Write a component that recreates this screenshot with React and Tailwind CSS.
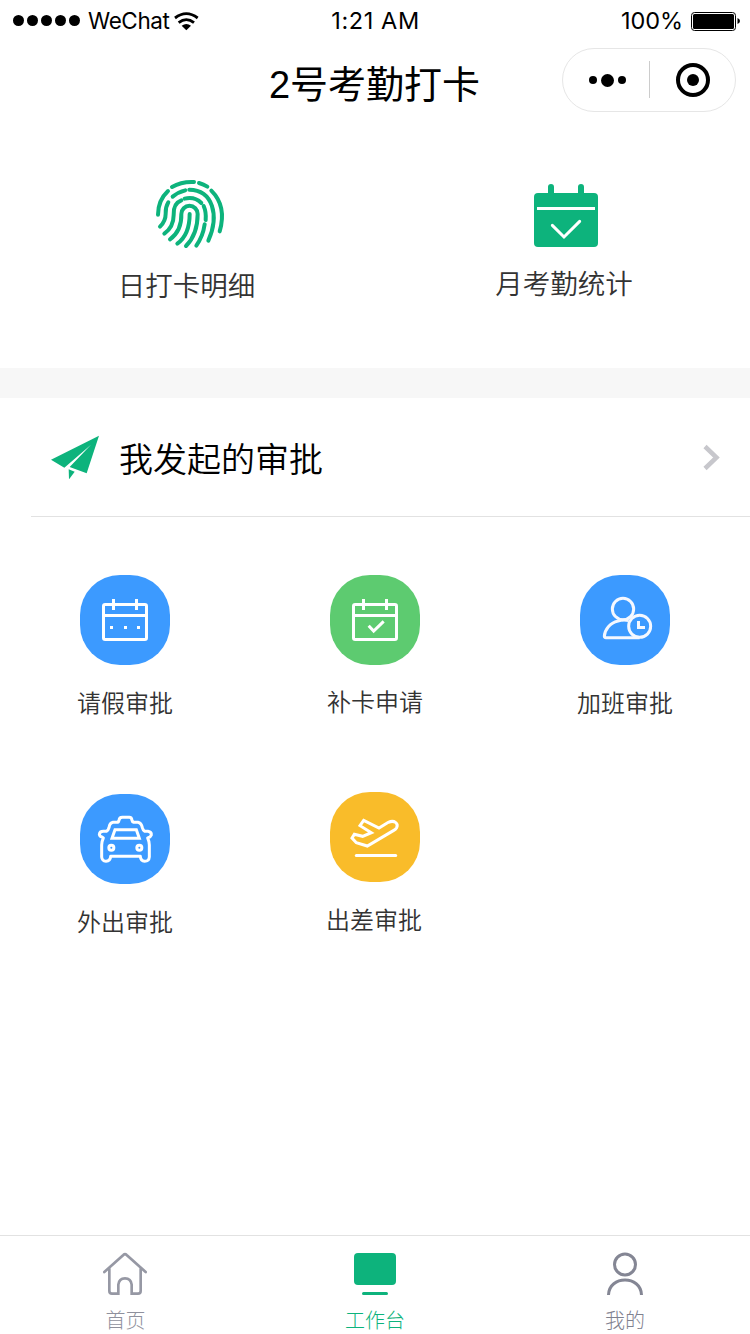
const green = "#0db37c";

function StatusBar() {
  return (
    <div className="grid h-10 grid-cols-3 items-center pl-[13px] pr-[9px] font-['Inter',sans-serif] text-[23.5px] leading-[40px] text-black">
      <div className="flex items-center">
        <div className="flex gap-[3px]">
          {[0, 1, 2, 3, 4].map((i) => (
            <span key={i} className="size-[11px] rounded-full bg-black" />
          ))}
        </div>
        <span className="ml-[8px] w-[86px] pt-px text-[22.500px] tracking-[-0.4px]">WeChat</span>
        <svg className="h-[20px] w-[26px]" viewBox="522 33 78 60" fill="none" stroke="#000" strokeWidth="8.500">
          <path d="M525 54 Q559 28 593 54" />
          <path d="M536 68 Q559 50 582 68" />
          <path d="M545 77 Q559 67 573 77 L559 91Z" fill="#000" stroke="none" />
        </svg>
      </div>
      <div className="pr-[3px] text-center tracking-[0.6px]">1:21 AM</div>
      <div className="flex items-center justify-end">
        <span className="mr-[8px] tracking-[-0.1px]">100%</span>
        <svg className="h-[20px] w-[50px]" viewBox="0 0 50 20">
          <rect x=".5" y="1.5" width="44" height="18" rx="3" fill="#fff" stroke="#000" />
          <rect x="2" y="3" width="41" height="15" rx="1.5" />
          <path d="M46.5 7 Q49 8 49 10 Q49 12 46.5 13Z" />
        </svg>
      </div>
    </div>
  );
}

function NavBar() {
  return (
    <header className="grid h-[88px] grid-cols-[1fr_auto_1fr] items-start pr-[1px] pt-2">
      <div />
      <h1 className="pt-[10px] font-['Liberation_Sans','Noto_Sans_CJK_SC',sans-serif] text-[38px] font-normal leading-[54px] text-black">2号考勤打卡</h1>
      <div className="mr-[13px] flex h-16 w-[174px] items-center justify-self-end rounded-full border border-[#e6e6e6]">
        <div className="flex w-[86px] items-center justify-center gap-1 pl-[2px]">
          <span className="size-2 rounded-full bg-black" />
          <span className="size-[13px] rounded-full bg-black" />
          <span className="size-2 rounded-full bg-black" />
        </div>
        <span className="mb-[2px] h-[37px] w-px bg-[#cccccc]" />
        <div className="flex flex-1 justify-center">
          <span className="flex size-[34px] items-center justify-center rounded-full border-4 border-black">
            <span className="size-3 rounded-full bg-black" />
          </span>
        </div>
      </div>
    </header>
  );
}

function Fingerprint() {
  return (
    <svg className="size-[90px]" viewBox="0 0 270 270" fill="none" stroke={green} strokeWidth="12" strokeLinecap="round">
      <path d="M39 134 Q39 91 69 63" />
      <path d="M81 51 Q110 34 147 36" />
      <path d="M162 39 Q176 43 187 50" />
      <path d="M199 62 C232 95 237 140 224 184" />
      <path d="M83 80 Q100 66 121 61" />
      <path d="M133 59 C203 60 224 135 190 212" />
      <path d="M70 97 Q61 112 62 131 Q62 153 45 170" />
      <path d="M109 91 C90 98 85 116 86 135 C86 160 76 178 58 191" />
      <path d="M119 86 Q149 79 169 99" />
      <path d="M176 108 Q184 126 182 150" />
      <path d="M179 163 Q174 199 154 227" />
      <path d="M75 208 C101 189 110 165 109 132 A24 24 0 0 1 158 132 C158 165 149 202 123 228" />
      <path d="M134 132 C134 165 126 200 97 221" />
    </svg>
  );
}

function CalendarSolid() {
  return (
    <svg className="h-[66px] w-[66px]" viewBox="159 54 198 198" fill="none" strokeLinecap="round">
      <rect x="162" y="84" width="192" height="162" rx="12" fill={green} />
      <path d="M213 66V95M303 66V95" stroke={green} strokeWidth="18" />
      <path d="M171 130.500H345" stroke="#fff" strokeWidth="9" strokeLinecap="butt" />
      <path d="M217 181L252 216L299 169" stroke="#fff" strokeWidth="9" />
    </svg>
  );
}

function PaperPlane() {
  return (
    <svg className="h-[44px] w-[50px]" viewBox="64 45 150 132" fill={green}>
      <path d="M208 47L64 119L104 143L184 74L120 141L171 160Z" />
      <path d="M117 148L135 155L118 178Z" />
    </svg>
  );
}

function Calendar({ children }) {
  return (
    <svg className="size-[90px]" viewBox="60 45 270 270" fill="none" stroke="#fff" strokeWidth="9">
      <rect x="130.500" y="133.500" width="129" height="105" rx="5" />
      <path d="M130 166.500H260M160.500 117V150M229.500 117V150" />
      {children}
    </svg>
  );
}

const LeaveIcon = () => (
  <Calendar>
    <path d="M150 202.500H159M192 202.500H201M231 202.500H240" />
  </Calendar>
);

const CardIcon = () => (
  <Calendar>
    <path d="M176 197L191 213L221 184" />
  </Calendar>
);

const OvertimeIcon = () => (
  <svg className="size-[90px]" viewBox="60 45 270 270" fill="none" stroke="#f5f8ff" strokeWidth="9">
    <circle cx="189" cy="147" r="32" />
    <path d="M206 182Q190 178 174 183C149 189 134 209 133 229Q133 233 138 233H239" strokeLinejoin="round" />
    <circle cx="239" cy="199" r="33" />
    <path d="M235.500 183V202.500H255" />
  </svg>
);

const CarIcon = () => (
  <svg className="size-[90px]" viewBox="60 42 270 270" fill="none" stroke="#fff" strokeWidth="9" strokeLinejoin="round">
    <path d="M126 171Q119 170 118 163Q119 154 130 154H139Q145 151 147 143Q149 129 159 127H173Q176 126 177 121Q178 112 187 112H208Q215 112 216 121Q217 126 221 127H234Q244 129 247 143Q249 151 254 154H264Q275 156 274 165Q272 171 263 174Q267 182 268 195V231Q267 244 254 244Q242 243 241 229H152Q151 243 138 244Q126 243 125 231V195Q126 182 130 174Z" />
    <path d="M165 149H229L238 175H156Z" strokeLinejoin="miter" />
    <circle cx="154" cy="203" r="7.500" />
    <circle cx="238" cy="203" r="7.500" />
  </svg>
);

const PlaneIcon = () => (
  <svg className="size-[90px]" viewBox="810 36 270 270" fill="none" stroke="#fff" strokeWidth="9">
    <path d="M911 121L957 144L985 127C1003 119 1016 130 1010 143Q1007 148 1000 152L922 198L889 188L876 174L883 163L908 169L934 158L900 137Z" />
    <path d="M889 226.500H1007" strokeLinecap="round" />
  </svg>
);

const apps = [
  { label: "请假审批", Icon: LeaveIcon, bg: "bg-[#3c9aff]", offset: "pt-[58px]" },
  { label: "补卡申请", Icon: CardIcon, bg: "bg-[#5dcb70]", offset: "pt-[58px]", text: "mt-[18px]" },
  { label: "加班审批", Icon: OvertimeIcon, bg: "bg-[#3c9aff]", offset: "pt-[58px]" },
  { label: "外出审批", Icon: CarIcon, bg: "bg-[#3c9aff]", offset: "pt-[58px]" },
  { label: "出差审批", Icon: PlaneIcon, bg: "bg-[#f9bc2a]", offset: "pt-[56px]", text: "mt-[19px] pr-[2px]" },
];

function TabBar() {
  return (
    <nav className="mt-auto grid h-[99px] grid-cols-3 border-t border-[#e2e2e2] text-[20px] font-light leading-6 text-[#8f919d]">
      <div className="flex flex-col items-center pt-[15px]">
        <svg className="h-[48px] w-[50px]" viewBox="60 78 150 144" fill="none" stroke="#9698a4" strokeWidth="8">
          <path d="M73 141L130 90Q135 85 140 90L197 141" strokeLinecap="round" />
          <path d="M88 130V198Q88 206 96 206H115V179Q117 160 135 160Q153 160 155 179V206H174Q182 206 182 198V130" />
        </svg>
        <span className="mt-[9px] pl-px">首页</span>
      </div>
      <div className="flex flex-col items-center pt-[17px] text-[#0db37c]">
        <span className="h-8 w-[42px] rounded-[4px] bg-[#0db37c]" />
        <span className="mt-[7px] h-[3px] w-[26px] rounded-full bg-[#0db37c]" />
        <span className="mt-[13px]">工作台</span>
      </div>
      <div className="flex flex-col items-center pt-[15px] text-[#7f818f]">
        <svg className="h-[48px] w-[50px]" viewBox="0 0 50 48" fill="none" stroke="#848694" strokeWidth="3">
          <circle cx="25" cy="13.500" r="10.500" />
          <path d="M8.500 44C9 24 41 24 41.500 44" />
        </svg>
        <span className="mt-[9px]">我的</span>
      </div>
    </nav>
  );
}

export default function App() {
  return (
    <div className="flex h-[1334px] w-[750px] flex-col bg-white font-['Noto_Sans_CJK_SC',sans-serif]">
      <StatusBar />
      <NavBar />
      <section className="grid h-[240px] grid-cols-2 text-[27.500px] font-[350] leading-10 text-[#333]">
        <div className="flex flex-col items-center pt-[42px]">
          <div className="pl-[5px]"><Fingerprint /></div>
          <span className="mt-[4px] pr-[2px]">日打卡明细</span>
        </div>
        <div className="flex flex-col items-center pt-[55px]">
          <div className="pl-[6px]"><CalendarSolid /></div>
          <span className="mt-[13px] pl-[3px]">月考勤统计</span>
        </div>
      </section>
      <div className="h-[30px] bg-[#f7f7f7]" />
      <div className="ml-[31px] flex h-[119px] items-center border-b border-[#e2e2e2] pl-[20px] pr-[29px]">
        <PaperPlane />
        <span className="ml-[18px] flex-1 pt-px text-[34px] font-[350] leading-[50px] text-black">我发起的审批</span>
        <svg className="h-[28px] w-[18px]" viewBox="0 0 18 28" fill="none" stroke="#c7c7cc" strokeWidth="4.500">
          <path d="M2 3.500L13.500 14.500L2 25.500" />
        </svg>
      </div>
      <section className="grid grid-cols-3 grid-rows-[219px_219px] text-[24px] font-[350] leading-9 text-[#333]">
        {apps.map(({ label, Icon, bg, offset, text = "mt-[19px]" }) => (
          <div key={label} className={`flex flex-col items-center ${offset}`}>
            <div className={`rounded-[40px] ${bg}`}>
              <Icon />
            </div>
            <span className={text}>{label}</span>
          </div>
        ))}
      </section>
      <TabBar />
    </div>
  );
}
